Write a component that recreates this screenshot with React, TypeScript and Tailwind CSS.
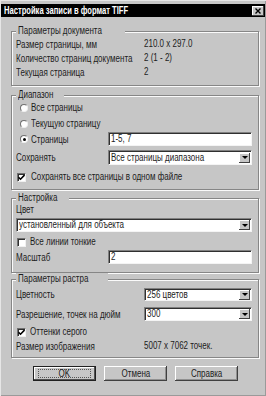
import React from "react";

const sunken =
  "bg-white border border-t-[#808080] border-l-[#808080] border-b-[#f4f4f4] border-r-[#f4f4f4] shadow-[inset_1px_1px_0_#303030]";

function T({ children, center }: { children: React.ReactNode; center?: boolean }) {
  return (
    <span
      className={`inline-block whitespace-nowrap leading-none scale-x-[0.8] ${center ? "origin-center" : "origin-left"}`}
    >
      {children}
    </span>
  );
}

function Group({ title, className, children }: { title: string; className: string; children: React.ReactNode }) {
  return (
    <div
      className={`ml-[11px] w-[248px] border border-[#868686] shadow-[inset_1px_1px_0_#fafafa,1px_1px_0_#fafafa] flex flex-col ${className}`}
    >
      <div className="-mt-[7px] ml-[4px] self-start px-[2px] h-[12px] flex items-center bg-[#c6c6c6]">
        <span className="inline-block whitespace-nowrap leading-none">
          <span className="inline-block scale-x-[0.8] origin-left -mr-[20%]">{title}</span>
        </span>
      </div>
      {children}
    </div>
  );
}

function Arrow() {
  return (
    <div className="ml-auto mr-[1px] w-[11px] h-[10px] shrink-0 bg-[#c6c6c6] shadow-[inset_-1px_-1px_0_#404040,inset_1px_1px_0_#fff] flex items-center justify-center">
      <div className="w-0 h-0 border-l-[3px] border-r-[3px] border-t-[3px] border-l-transparent border-r-transparent border-t-black" />
    </div>
  );
}

function Select({ value, className }: { value: string; className: string }) {
  return (
    <div className={`${sunken} flex items-center pl-[2px] ${className}`}>
      <T>{value}</T>
      <Arrow />
    </div>
  );
}

function Input({ value, className }: { value: string; className: string }) {
  return (
    <div className={`${sunken} flex items-center pl-[2px] ${className}`}>
      <T>{value}</T>
    </div>
  );
}

function Radio({ checked }: { checked?: boolean }) {
  return (
    <div className="w-[8px] h-[8px] rounded-full bg-white border border-t-[#707070] border-l-[#707070] border-b-[#f0f0f0] border-r-[#f0f0f0] flex items-center justify-center shrink-0">
      {checked && <div className="w-[3px] h-[3px] rounded-full bg-black" />}
    </div>
  );
}

function Check({ checked }: { checked?: boolean }) {
  return (
    <div className="w-[9px] h-[9px] bg-white border border-t-[#707070] border-l-[#707070] border-b-[#f0f0f0] border-r-[#f0f0f0] shadow-[inset_1px_1px_0_#303030] flex items-center justify-center shrink-0">
      {checked && (
        <svg width="7" height="7" viewBox="0 0 7 7">
          <path d="M0.5 3.2 L2.5 5.2 L6.5 1" stroke="#000" strokeWidth="1.6" fill="none" />
        </svg>
      )}
    </div>
  );
}

function Button({ label, def, className }: { label: string; def?: boolean; className: string }) {
  return (
    <div
      className={`h-[15px] w-[63px] bg-[#c6c6c6] flex items-center justify-center ${
        def
          ? "border border-[#202020] shadow-[inset_-1px_-1px_0_#505050,inset_1px_1px_0_#fff]"
          : "shadow-[inset_-1px_-1px_0_#404040,inset_1px_1px_0_#fff,inset_-2px_-2px_0_#909090]"
      } ${className}`}
    >
      {def ? (
        <div className="w-[53px] h-[9px] border border-dotted border-[#555] flex items-center justify-center">
          <T center>{label}</T>
        </div>
      ) : (
        <T center>{label}</T>
      )}
    </div>
  );
}

function Line({ label, value }: { label: string; value: string }) {
  return (
    <div className="h-[14px] flex items-center pl-[4px]">
      <span className="w-[128px] shrink-0">
        <T>{label}</T>
      </span>
      <T>{value}</T>
    </div>
  );
}

export default function App() {
  return (
    <div className="w-[266px] h-[396px] bg-[#c6c6c6] text-[#1c1c1c] text-[10px] font-['Liberation_Sans',Arial,sans-serif] flex flex-col shadow-[inset_1px_1px_0_#e6e6e6,inset_-1px_-1px_0_#9a9a9a] overflow-hidden">
      <div className="mt-[4px] mx-[1px] h-[13px] bg-black flex items-center justify-between pl-[3px] pr-[1px]">
        <span className="text-white font-bold text-[10px] leading-none inline-block whitespace-nowrap scale-x-[0.76] origin-left">
          Настройка записи в формат TIFF
        </span>
        <div className="w-[12px] h-[10px] bg-[#c6c6c6] shadow-[inset_-1px_-1px_0_#404040,inset_1px_1px_0_#fff] flex items-center justify-center">
          <svg width="6" height="6" viewBox="0 0 6 6">
            <path d="M0.5 0.5 L5.5 5.5 M5.5 0.5 L0.5 5.5" stroke="#000" strokeWidth="1.4" />
          </svg>
        </div>
      </div>

      <Group title="Параметры документа" className="mt-[14px] pb-[6px]">
        <Line label="Размер страницы, мм" value="210.0 x 297.0" />
        <Line label="Количество страниц документа" value="2 (1 - 2)" />
        <Line label="Текущая страница" value="2" />
      </Group>

      <Group title="Диапазон" className="mt-[9px] pb-[5px]">
        <div className="h-[14px] flex items-center pl-[8px] gap-[3px]">
          <Radio />
          <T>Все страницы</T>
        </div>
        <div className="mt-[2px] h-[14px] flex items-center pl-[8px] gap-[3px]">
          <Radio />
          <T>Текущую страницу</T>
        </div>
        <div className="mt-[1px] h-[14px] flex items-center pl-[8px]">
          <Radio checked />
          <span className="ml-[3px] w-[77px] shrink-0">
            <T>Страницы</T>
          </span>
          <Input value="1-5, 7" className="flex-1 mr-[6px] h-[14px]" />
        </div>
        <div className="mt-[4px] h-[15px] flex items-center pl-[4px]">
          <span className="w-[92px] shrink-0">
            <T>Сохранять</T>
          </span>
          <Select value="Все страницы диапазона" className="flex-1 mr-[6px] h-[15px]" />
        </div>
        <div className="mt-[5px] h-[14px] flex items-center pl-[5px] gap-[5px]">
          <Check checked />
          <T>Сохранять все страницы в одном файле</T>
        </div>
      </Group>

      <Group title="Настройка" className="mt-[8px] pb-[8px]">
        <div className="h-[11px] flex items-center pl-[4px]">
          <T>Цвет</T>
        </div>
        <div className="mt-[3px] h-[14px] flex items-center pl-[4px] pr-[6px]">
          <Select value="установленный для объекта" className="flex-1 h-[14px]" />
        </div>
        <div className="mt-[3px] h-[14px] flex items-center pl-[5px] gap-[4px]">
          <Check />
          <T>Все линии тонкие</T>
        </div>
        <div className="mt-[1px] h-[14px] flex items-center pl-[4px]">
          <span className="w-[92px] shrink-0">
            <T>Масштаб</T>
          </span>
          <Input value="2" className="flex-1 mr-[6px] h-[14px]" />
        </div>
      </Group>

      <Group title="Параметры растра" className="mt-[6px] pb-[4px]">
        <div className="mt-[3px] h-[13px] flex items-center pl-[4px]">
          <span className="w-[128px] shrink-0">
            <T>Цветность</T>
          </span>
          <Select value="256 цветов" className="flex-1 mr-[6px] h-[13px]" />
        </div>
        <div className="mt-[6px] h-[14px] flex items-center pl-[4px]">
          <span className="w-[128px] shrink-0">
            <T>Разрешение, точек на дюйм</T>
          </span>
          <Select value="300" className="flex-1 mr-[6px] h-[14px]" />
        </div>
        <div className="mt-[4px] h-[14px] flex items-center pl-[5px] gap-[4px]">
          <Check checked />
          <T>Оттенки серого</T>
        </div>
        <Line label="Размер изображения" value="5007 x 7062 точек." />
      </Group>

      <div className="mt-[8px] flex">
        <Button label="OK" def className="ml-[33px]" />
        <Button label="Отмена" className="ml-[8px]" />
        <Button label="Справка" className="ml-[8px]" />
      </div>
    </div>
  );
}
